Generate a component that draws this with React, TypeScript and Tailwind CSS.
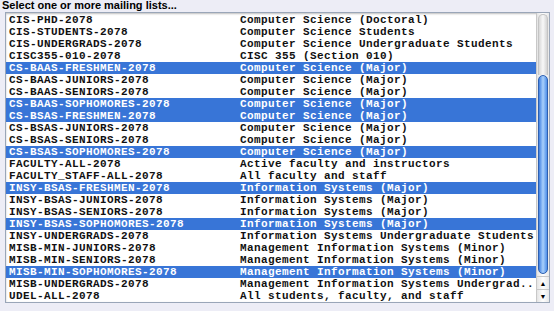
const lists: [string, string, boolean][] = [
  ["CIS-PHD-2078", "Computer Science (Doctoral)", false],
  ["CIS-STUDENTS-2078", "Computer Science Students", false],
  ["CIS-UNDERGRADS-2078", "Computer Science Undergraduate Students", false],
  ["CISC355-010-2078", "CISC 355 (Section 010)", false],
  ["CS-BAAS-FRESHMEN-2078", "Computer Science (Major)", true],
  ["CS-BAAS-JUNIORS-2078", "Computer Science (Major)", false],
  ["CS-BAAS-SENIORS-2078", "Computer Science (Major)", false],
  ["CS-BAAS-SOPHOMORES-2078", "Computer Science (Major)", true],
  ["CS-BSAS-FRESHMEN-2078", "Computer Science (Major)", true],
  ["CS-BSAS-JUNIORS-2078", "Computer Science (Major)", false],
  ["CS-BSAS-SENIORS-2078", "Computer Science (Major)", false],
  ["CS-BSAS-SOPHOMORES-2078", "Computer Science (Major)", true],
  ["FACULTY-ALL-2078", "Active faculty and instructors", false],
  ["FACULTY_STAFF-ALL-2078", "All faculty and staff", false],
  ["INSY-BSAS-FRESHMEN-2078", "Information Systems (Major)", true],
  ["INSY-BSAS-JUNIORS-2078", "Information Systems (Major)", false],
  ["INSY-BSAS-SENIORS-2078", "Information Systems (Major)", false],
  ["INSY-BSAS-SOPHOMORES-2078", "Information Systems (Major)", true],
  ["INSY-UNDERGRADS-2078", "Information Systems Undergraduate Students", false],
  ["MISB-MIN-JUNIORS-2078", "Management Information Systems (Minor)", false],
  ["MISB-MIN-SENIORS-2078", "Management Information Systems (Minor)", false],
  ["MISB-MIN-SOPHOMORES-2078", "Management Information Systems (Minor)", true],
  ["MISB-UNDERGRADS-2078", "Management Information Systems Undergrad..", false],
  ["UDEL-ALL-2078", "All students, faculty, and staff", false],
];

function Scrollbar() {
  return (
    <div className="flex w-[13px] flex-col border-l border-[#c8c8c8] bg-gradient-to-r from-[#e4e4e4] via-white to-[#e8e8e8]">
      <div className="flex-1 px-[1px] pt-[1px]">
        <div className="h-[61px] rounded-t-full border border-b-0 border-[#c4c4c4] bg-gradient-to-r from-[#d8d8d8] via-[#f8f8f8] to-[#d4d4d4]" />
        <div className="h-[199px] rounded-full border border-[#2d5fb0] bg-gradient-to-r from-[#3f7fe0] via-[#a9d0fb] to-[#4d8ee8]" />
      </div>
      <div className="flex h-[13px] items-center justify-center border-t border-[#c8c8c8] text-[7px] leading-none text-black">
        ▲
      </div>
      <div className="flex h-[13px] items-center justify-center border-t border-[#c8c8c8] text-[7px] leading-none text-black">
        ▼
      </div>
    </div>
  );
}

export default function App() {
  return (
    <div className="h-[311px] w-[554px] overflow-hidden bg-[#ededf6] font-['Liberation_Sans',sans-serif]">
      <div className="h-[12px] pl-[2px] text-[11px] font-bold leading-[11px] text-black">
        Select one or more mailing lists...
      </div>
      <div className="ml-[5px] flex h-[291px] w-[545px] border border-[#9aa6b8] bg-white shadow-[inset_0_1px_2px_rgba(0,0,0,0.25)]">
        <div className="flex-1 pt-[1px] font-['Liberation_Mono',monospace] text-[11px] font-bold leading-[12px] tracking-[0.4px] whitespace-pre">
          {lists.map(([name, desc, sel]) => (
            <div
              key={name}
              className={`flex h-[12px] overflow-hidden pl-[3px] ${sel ? "bg-[#3875d7] text-white" : "text-[#111]"}`}
            >
              <span className="w-[231px]">{name}</span>
              <span>{desc}</span>
            </div>
          ))}
        </div>
        <Scrollbar />
      </div>
    </div>
  );
}
